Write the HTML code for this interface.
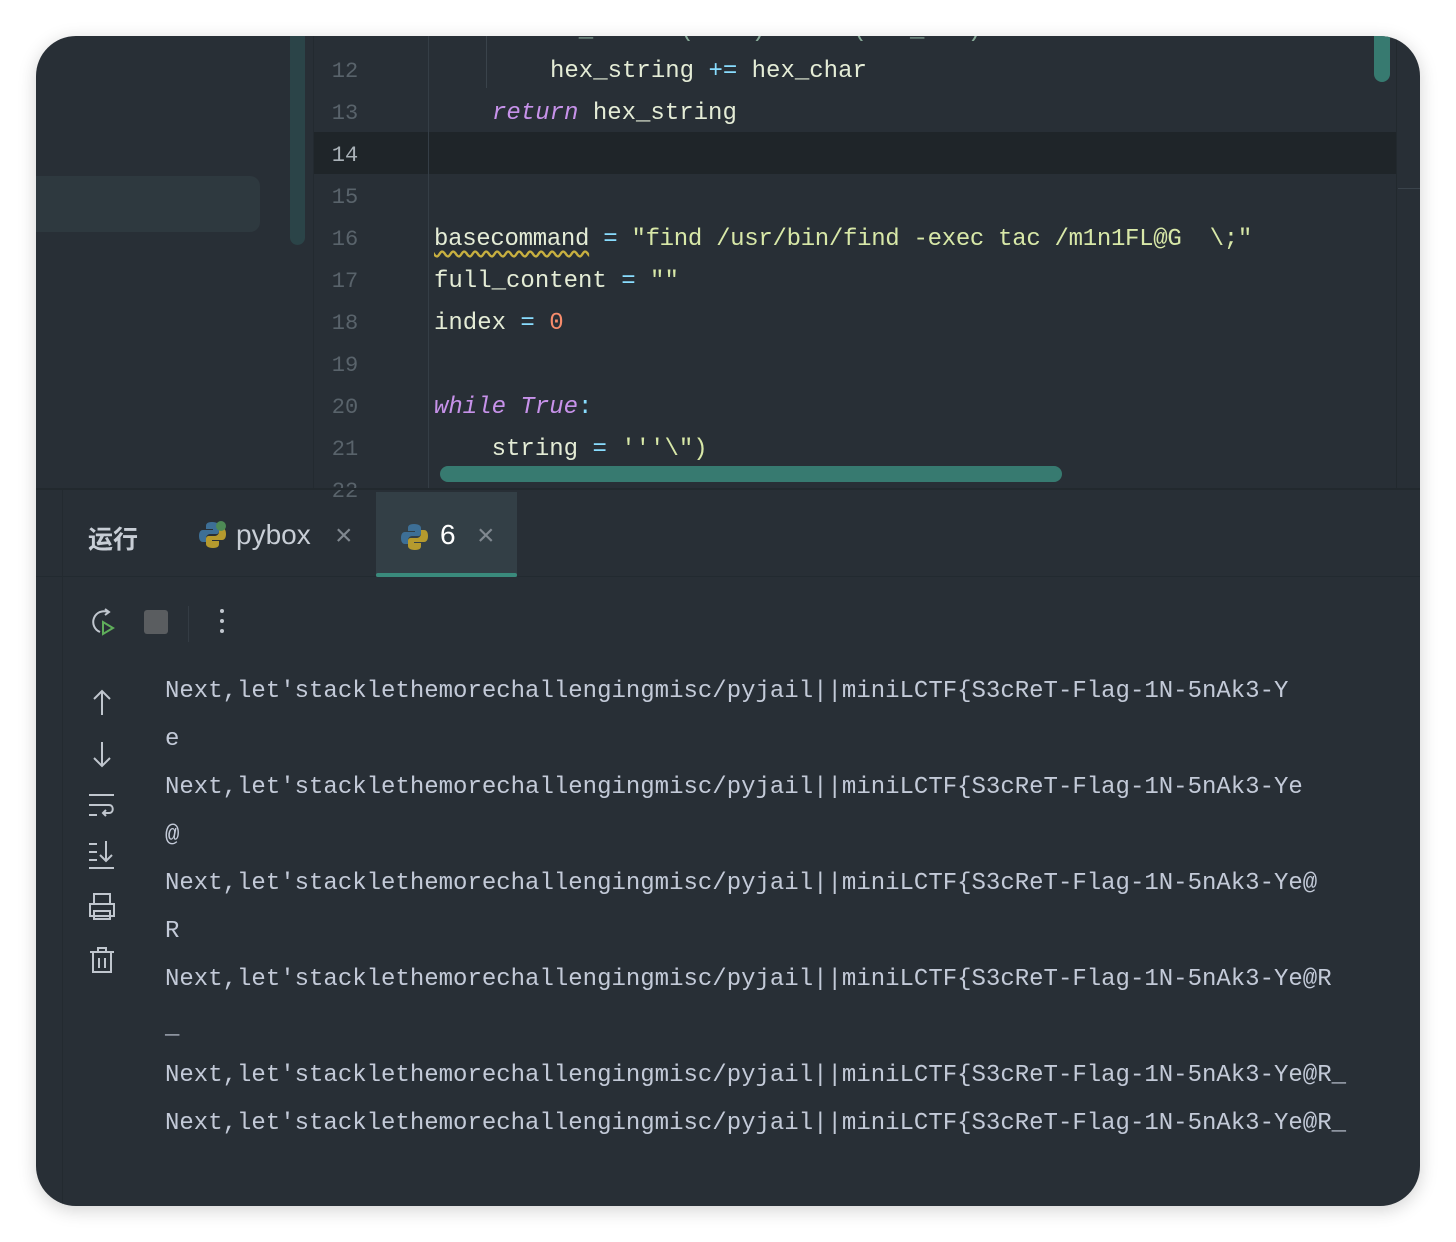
<!DOCTYPE html>
<html><head><meta charset="utf-8"><style>
body{margin:0;width:1456px;height:1242px;background:#fff;position:relative;overflow:hidden;font-family:"Liberation Mono",monospace}
.win{position:absolute;left:36px;top:36px;width:1384px;height:1170px;background:#282f36;border-radius:40px;overflow:hidden;box-shadow:0 4px 18px rgba(0,0,0,.18)}
.a{position:absolute}
.ln{position:absolute;left:279px;width:60px;text-align:center;color:#59636b;font-size:22px;line-height:42px}
.code{position:absolute;left:398px;font-size:24px;line-height:42px;color:#e4ecd6;white-space:pre}
.kw{color:#c792ea;font-style:italic}
.op{color:#89ddff}
.st{color:#d8e8a8}
.nu{color:#f78c6c}
.out{position:absolute;left:129px;font-size:24px;line-height:48px;color:#c3cad8;white-space:pre}
svg{position:absolute}
</style></head><body>
<div class="win">
  <div class="a" style="left:0;top:140px;width:224px;height:56px;background:#2e393f;border-radius:0 10px 10px 0"></div>
  <div class="a" style="left:254px;top:0;width:15px;height:209px;background:#2b4448;border-radius:0 0 8px 8px"></div>
  <div class="a" style="left:277px;top:0;width:1px;height:452px;background:#232a30"></div>
  <div class="a" style="left:278px;top:96px;width:1082px;height:42px;background:#1f2529"></div>
  <div class="a" style="left:392px;top:0;width:1px;height:452px;background:#353e46"></div>
  <div class="a" style="left:450px;top:0;width:1px;height:52px;background:#3a434b"></div>
  <div class="ln" style="top:15px">12</div>
  <div class="ln" style="top:57px">13</div>
  <div class="ln" style="top:99px;color:#aab2b8">14</div>
  <div class="ln" style="top:141px">15</div>
  <div class="ln" style="top:183px">16</div>
  <div class="ln" style="top:225px">17</div>
  <div class="ln" style="top:267px">18</div>
  <div class="ln" style="top:309px">19</div>
  <div class="ln" style="top:351px">20</div>
  <div class="ln" style="top:393px">21</div>
  <div class="ln" style="top:435px">22</div>
  <div class="code" style="top:-26px;left:514px;color:#8a9">  _ .    ( .  )   .  (   _ . )</div>
  <div class="code" style="top:15px;left:514px">hex_string <span class="op">+=</span> hex_char</div>
  <div class="code" style="top:57px;left:456px"><span class="kw">return</span> hex_string</div>
  <div class="code" style="top:183px;letter-spacing:-0.3px"><span style="text-decoration:underline wavy #c8b040;text-underline-offset:5px">basecommand</span> <span class="op">=</span> <span class="st">"find /usr/bin/find -exec tac /m1n1FL@G  \;"</span></div>
  <div class="code" style="top:225px">full_content <span class="op">=</span> <span class="st">""</span></div>
  <div class="code" style="top:267px">index <span class="op">=</span> <span class="nu">0</span></div>
  <div class="code" style="top:351px"><span class="kw">while</span> <span class="kw">True</span><span class="op">:</span></div>
  <div class="code" style="top:393px">    string <span class="op">=</span> <span class="st">'''\")</span></div>
  <div class="a" style="left:404px;top:430px;width:622px;height:16px;background:#377a70;border-radius:8px"></div>
  <div class="a" style="left:1338px;top:0;width:16px;height:46px;background:#377a70;border-radius:0 0 8px 8px"></div>
  <div class="a" style="left:1360px;top:0;width:1px;height:452px;background:#22292e"></div>
  <div class="a" style="left:1362px;top:152px;width:22px;height:1px;background:#3a434b"></div>
  <div class="a" style="left:0;top:452px;width:1384px;height:2px;background:#22292e"></div>
  <div class="a" style="left:0;top:540px;width:1384px;height:1px;background:#222a30"></div>
  <div class="a" style="left:26px;top:454px;width:1px;height:716px;background:#232a30"></div>
  <div class="a" style="left:52px;top:484px;font-family:'Liberation Sans','Noto Sans CJK SC',sans-serif;font-size:25px;color:#c8ced6;font-weight:bold">运行</div>
  <svg style="left:162px;top:484px" width="30" height="30" viewBox="0 0 30 30"><path d="M14 2c-5 0-6 2-6 4v3h7v1H5c-3 0-4 3-4 6s1 6 4 6h3v-4c0-2 2-4 4-4h6c2 0 3-1 3-3V6c0-2-2-4-7-4z" fill="#3d6f96"/><path d="M15 28c5 0 6-2 6-4v-3h-7v-1h10c3 0 4-3 4-6s-1-6-4-6h-3v4c0 2-2 4-4 4h-6c-2 0-3 1-3 3v5c0 2 2 4 7 4z" fill="#b59a2e"/><circle cx="23" cy="6" r="5" fill="#4e8a55"/></svg>
  <div class="a" style="left:200px;top:483px;font-family:'Liberation Sans',sans-serif;font-size:28px;color:#c8ced6">pybox</div>
  <div class="a" style="left:299px;top:483px;font-family:'Liberation Sans',sans-serif;font-size:30px;color:#808890">×</div>
  <div class="a" style="left:340px;top:456px;width:141px;height:85px;background:#333f46"></div>
  <div class="a" style="left:340px;top:537px;width:141px;height:4px;background:#3a8a7c;border-radius:2px"></div>
  <svg style="left:364px;top:486px" width="30" height="30" viewBox="0 0 30 30"><path d="M14 2c-5 0-6 2-6 4v3h7v1H5c-3 0-4 3-4 6s1 6 4 6h3v-4c0-2 2-4 4-4h6c2 0 3-1 3-3V6c0-2-2-4-7-4z" fill="#3d6f96"/><path d="M15 28c5 0 6-2 6-4v-3h-7v-1h10c3 0 4-3 4-6s-1-6-4-6h-3v4c0 2-2 4-4 4h-6c-2 0-3 1-3 3v5c0 2 2 4 7 4z" fill="#b59a2e"/></svg>
  <div class="a" style="left:404px;top:483px;font-family:'Liberation Sans',sans-serif;font-size:28px;color:#fff">6</div>
  <div class="a" style="left:441px;top:483px;font-family:'Liberation Sans',sans-serif;font-size:30px;color:#808890">×</div>
  <svg style="left:52px;top:570px" width="34" height="34" viewBox="0 0 34 34"><path d="M20 6a10 10 0 1 0-8 20" fill="none" stroke="#c0c6ce" stroke-width="2"/><path d="M17 3l4 3-4 3" fill="none" stroke="#c0c6ce" stroke-width="2"/><path d="M15 16v12l10-6z" fill="none" stroke="#5fae5a" stroke-width="2"/></svg>
  <div class="a" style="left:108px;top:574px;width:24px;height:24px;background:#5a5d60;border-radius:3px"></div>
  <div class="a" style="left:152px;top:570px;width:1px;height:36px;background:#343c44"></div>
  <div class="a" style="left:184px;top:573px;width:4px;height:4px;background:#c0c6ce;border-radius:2px;box-shadow:0 10px 0 #c0c6ce,0 20px 0 #c0c6ce"></div>
  <svg style="left:52px;top:650px" width="30" height="340" viewBox="0 0 30 340" fill="none" stroke="#c0c6ce" stroke-width="2">
    <path d="M14 5v24M6 13l8-8 8 8"/>
    <path d="M14 56v24M6 72l8 8 8-8"/>
    <path d="M1 109h25M1 119h20c5 0 5 8 0 8h-6M18 124l-3 3 3 3M1 129h8"/>
    <path d="M1 158h8M1 166h8M1 174h8M18 155v20M12 169l6 6 6-6M1 182h25"/>
    <path d="M6 218v-10h16v10M2 218h24v12H2zM6 225h16v8H6z"/>
    <path d="M2 266h24M10 266v-4h8v4M5 266v20h18v-20M11 272v10M17 272v10"/>
  </svg>
  <div class="out" style="top:632px">Next,let'stacklethemorechallengingmisc/pyjail||miniLCTF{S3cReT-Flag-1N-5nAk3-Y</div>
  <div class="out" style="top:680px">e</div>
  <div class="out" style="top:728px">Next,let'stacklethemorechallengingmisc/pyjail||miniLCTF{S3cReT-Flag-1N-5nAk3-Ye</div>
  <div class="out" style="top:776px">@</div>
  <div class="out" style="top:824px">Next,let'stacklethemorechallengingmisc/pyjail||miniLCTF{S3cReT-Flag-1N-5nAk3-Ye@</div>
  <div class="out" style="top:872px">R</div>
  <div class="out" style="top:920px">Next,let'stacklethemorechallengingmisc/pyjail||miniLCTF{S3cReT-Flag-1N-5nAk3-Ye@R</div>
  <div class="out" style="top:968px">_</div>
  <div class="out" style="top:1016px">Next,let'stacklethemorechallengingmisc/pyjail||miniLCTF{S3cReT-Flag-1N-5nAk3-Ye@R_</div>
  <div class="out" style="top:1064px">Next,let'stacklethemorechallengingmisc/pyjail||miniLCTF{S3cReT-Flag-1N-5nAk3-Ye@R_</div>
</div>
</body></html>
